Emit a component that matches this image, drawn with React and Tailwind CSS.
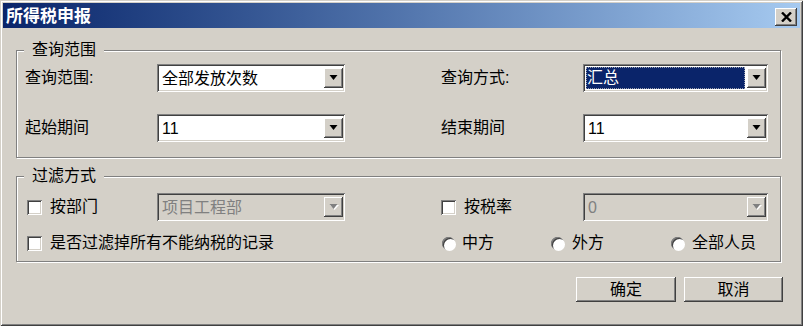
import React from 'react';

const raised = "shadow-[inset_-1px_-1px_#404040,inset_1px_1px_#ffffff,inset_-2px_-2px_#808080,inset_2px_2px_#d4d0c8]";
const sunken = "shadow-[inset_1px_1px_#808080,inset_-1px_-1px_#ffffff,inset_2px_2px_#404040,inset_-2px_-2px_#d4d0c8]";

function DropBtn({ disabled }) {
    return (
        <div className={`w-[19px] h-[20px] self-center bg-[#d4d0c8] flex items-center justify-center ${raised}`}>
            <svg width="10" height="6" viewBox="0 0 10 6">
                {disabled && <polygon points="1,1 10,1 5.5,6" fill="#ffffff" />}
                <polygon points="0.5,0 8.5,0 4.5,5" fill={disabled ? '#808080' : '#000000'} />
            </svg>
        </div>
    );
}

function Combo({ value, width, disabled, selected }) {
    return (
        <div className={`flex h-[28px] p-[2px] shrink-0 ${width} ${disabled ? 'bg-[#d4d0c8]' : 'bg-white'} ${sunken}`}>
            {selected ? (
                <div className="flex-1 m-[1px] mr-[2px] flex items-center bg-[#0a246a] text-white border border-dotted border-[#9aa0b0]">
                    <span>{value}</span>
                </div>
            ) : (
                <div className={`flex-1 flex items-center pl-[3px] pt-[1px] ${disabled ? 'text-[#808080]' : 'text-black'}`}>
                    {value}
                </div>
            )}
            <DropBtn disabled={disabled} />
        </div>
    );
}

function Check() {
    return <div className={`w-[15px] h-[15px] shrink-0 bg-white ${sunken}`}></div>;
}

function Radio() {
    return (
        <div className="w-[13px] h-[13px] shrink-0 rounded-full bg-white shadow-[inset_1px_1px_#808080,inset_2px_2px_#404040,1px_1px_#ffffff]"></div>
    );
}

function Group({ title, className, children }) {
    return (
        <div className={`relative w-[765px] border border-[#808080] shadow-[inset_1px_1px_#ffffff,1px_1px_#ffffff] ${className}`}>
            <span className="absolute left-[7px] -top-[10px] px-[8px] leading-[18px] bg-[#d4d0c8]">{title}</span>
            {children}
        </div>
    );
}

function App() {
    return (
        <div className="w-[803px] h-[326px] p-[3px] flex flex-col bg-[#d4d0c8] text-[16px] text-black font-['Liberation_Sans','Noto_Sans_CJK_SC',sans-serif] shadow-[inset_1px_1px_#d4d0c8,inset_-1px_-1px_#404040,inset_2px_2px_#ffffff,inset_-2px_-2px_#808080]">
            {/* title bar */}
            <div className="h-[25px] flex items-center justify-between pl-[3px] pr-[3px] bg-linear-to-r from-[#0a246a] to-[#a6caf0]">
                <span className="text-white font-bold text-[17px] pt-[2px]">所得税申报</span>
                <div className={`w-[22px] h-[18px] mt-[3px] bg-[#d4d0c8] flex items-center justify-center ${raised}`}>
                    <svg width="11" height="10" viewBox="0 0 11 10">
                        <path d="M1 0.5 L10 9.5 M10 0.5 L1 9.5" stroke="#000" strokeWidth="2.4" />
                    </svg>
                </div>
            </div>

            <div className="flex flex-col px-[13px]">
                <Group title="查询范围" className="mt-[22px] h-[108px] pt-[13px] pl-[8px] flex flex-col gap-[22px]">
                    <div className="flex items-center h-[28px]">
                        <span className="w-[132px] shrink-0">查询范围:</span>
                        <Combo value="全部发放次数" width="w-[188px]" />
                        <span className="w-[142px] ml-[96px] shrink-0">查询方式:</span>
                        <Combo value="汇总" width="w-[185px]" selected />
                    </div>
                    <div className="flex items-center h-[28px]">
                        <span className="w-[132px] shrink-0">起始期间</span>
                        <Combo value="11" width="w-[188px]" />
                        <span className="w-[142px] ml-[96px] shrink-0">结束期间</span>
                        <Combo value="11" width="w-[185px]" />
                    </div>
                </Group>

                <Group title="过滤方式" className="mt-[18px] h-[86px] pt-[16px] pl-[8px] flex flex-col gap-[12px]">
                    <div className="flex items-center h-[28px]">
                        <div className="w-[132px] shrink-0 flex items-center">
                            <span className="ml-[2px]"><Check /></span>
                            <span className="ml-[8px]">按部门</span>
                        </div>
                        <Combo value="项目工程部" width="w-[188px]" disabled />
                        <div className="w-[142px] ml-[96px] shrink-0 flex items-center">
                            <Check />
                            <span className="ml-[8px]">按税率</span>
                        </div>
                        <Combo value="0" width="w-[185px]" disabled />
                    </div>
                    <div className="flex items-center h-[20px]">
                        <div className="w-[416px] shrink-0 flex items-center">
                            <span className="ml-[2px]"><Check /></span>
                            <span className="ml-[8px]">是否过滤掉所有不能纳税的记录</span>
                        </div>
                        <div className="w-[110px] shrink-0 flex items-center gap-[7px] pl-[1px]">
                            <Radio />
                            <span>中方</span>
                        </div>
                        <div className="w-[120px] shrink-0 flex items-center gap-[8px]">
                            <Radio />
                            <span>外方</span>
                        </div>
                        <div className="flex items-center gap-[8px]">
                            <Radio />
                            <span>全部人员</span>
                        </div>
                    </div>
                </Group>

                <div className="mt-[15px] flex justify-end gap-[8px] pr-[4px]">
                    <button className={`w-[100px] h-[25px] bg-[#d4d0c8] ${raised}`}>确定</button>
                    <button className={`w-[99px] h-[25px] bg-[#d4d0c8] ${raised}`}>取消</button>
                </div>
            </div>
        </div>
    );
}

export default App;
